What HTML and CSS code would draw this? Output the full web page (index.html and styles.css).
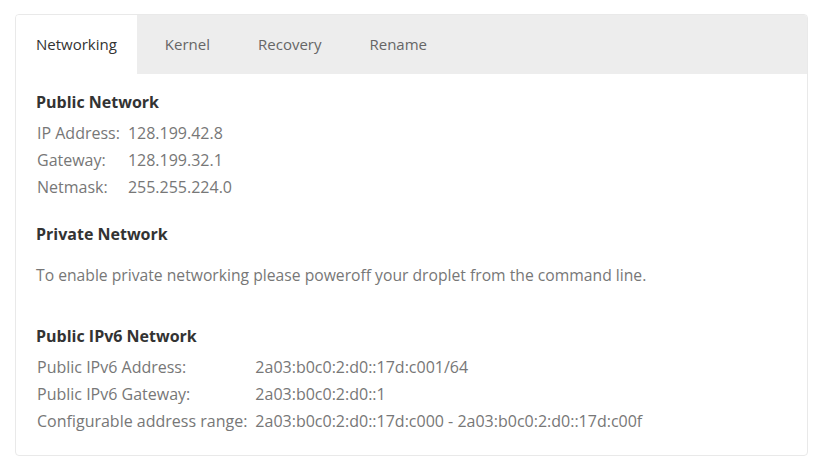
FILE: index.html
```html
<!DOCTYPE html>
<html>
<head>
<meta charset="utf-8">
<link rel="stylesheet" href="styles.css">
</head>
<body>
<div class="card">
  <div class="tabs">
    <div class="tab active">Networking</div>
    <div class="tab">Kernel</div>
    <div class="tab">Recovery</div>
    <div class="tab">Rename</div>
  </div>
  <div class="content">
    <h3 class="heading">Public Network</h3>
    <table class="info">
      <tr><td class="lbl">IP Address:</td><td>128.199.42.8</td></tr>
      <tr><td class="lbl">Gateway:</td><td>128.199.32.1</td></tr>
      <tr><td class="lbl">Netmask:</td><td>255.255.224.0</td></tr>
    </table>
    <h3 class="heading second">Private Network</h3>
    <p class="note">To enable private networking please poweroff your droplet from the command line.</p>
    <h3 class="heading third">Public IPv6 Network</h3>
    <table class="info">
      <tr><td class="lbl">Public IPv6 Address:</td><td>2a03:b0c0:2:d0::17d:c001/64</td></tr>
      <tr><td class="lbl">Public IPv6 Gateway:</td><td>2a03:b0c0:2:d0::1</td></tr>
      <tr><td class="lbl">Configurable address range:</td><td>2a03:b0c0:2:d0::17d:c000 - 2a03:b0c0:2:d0::17d:c00f</td></tr>
    </table>
  </div>
</div>
</body>
</html>
```
FILE: styles.css
```css
* { box-sizing: border-box; }
body {
  margin: 0;
  padding: 14px 14px 0 15px;
  background: #fff;
  font-family: "Open Sans", sans-serif;
  font-size: 16px;
  color: #777;
}
.card {
  width: 793px;
  height: 442px;
  border: 1px solid #e9e9e9;
  border-radius: 4px;
  overflow: hidden;
}
.tabs {
  display: flex;
  height: 59px;
  background: #ededed;
}
.tab {
  padding: 0 20px 2px;
  margin-right: 8px;
  display: flex;
  align-items: center;
  font-size: 15px;
  color: #666;
}
.tab.active {
  background: #fff;
  color: #333;
}
.content {
  padding: 17px 20px 0 20px;
}
.heading {
  margin: 0 0 7px;
  font-size: 16px;
  font-weight: 700;
  color: #333;
  line-height: 22px;
}
.heading.second { margin-top: 22px; }
.heading.third { margin-top: 0; }
.info {
  border-collapse: collapse;
}
.info td {
  padding: 0;
  height: 27px;
  line-height: 27px;
  vertical-align: middle;
}
.info td.lbl { padding-right: 8px; padding-left: 1px; }
.note {
  margin: 19px 0 39px;
  font-size: 15.7px;
  line-height: 22px;
}
```
